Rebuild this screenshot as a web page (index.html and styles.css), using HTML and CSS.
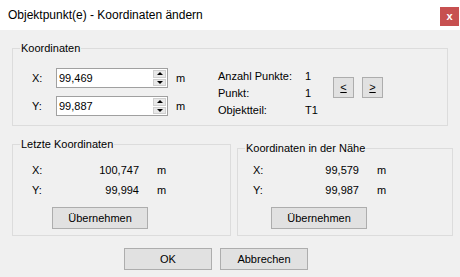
FILE: index.html
```html
<!DOCTYPE html>
<html lang="de">
<head>
  <meta charset="UTF-8" />
  <title>Objektpunkt(e) - Koordinaten ändern</title>
  <link rel="stylesheet" href="styles.css">
</head>
<body>
  <div class="dialog">
    <div class="titlebar">
      <span class="title">Objektpunkt(e) - Koordinaten ändern</span>
      <span class="close">x</span>
    </div>

    <div class="client">
      <fieldset class="group group-coords">
        <legend>Koordinaten</legend>
        <div class="coords">
          <div class="inputs">
            <div class="input-row">
              <span class="lbl">X:</span>
              <div class="spin">
                <span class="spin-value">99,469</span>
                <span class="spin-btns"><span class="spin-up"></span><span class="spin-down"></span></span>
              </div>
              <span class="unit">m</span>
            </div>
            <div class="input-row">
              <span class="lbl">Y:</span>
              <div class="spin">
                <span class="spin-value">99,887</span>
                <span class="spin-btns"><span class="spin-up"></span><span class="spin-down"></span></span>
              </div>
              <span class="unit">m</span>
            </div>
          </div>
          <div class="info">
            <div class="info-row"><span class="info-lbl">Anzahl Punkte:</span><span class="info-val">1</span></div>
            <div class="info-row"><span class="info-lbl">Punkt:</span><span class="info-val">1</span></div>
            <div class="info-row"><span class="info-lbl">Objektteil:</span><span class="info-val">T1</span></div>
          </div>
          <div class="nav-btns">
            <button class="btn btn-nav"><u>&lt;</u></button>
            <button class="btn btn-nav"><u>&gt;</u></button>
          </div>
        </div>
      </fieldset>

      <div class="lower">
        <fieldset class="group group-last">
          <legend>Letzte Koordinaten</legend>
          <div class="values">
            <div class="val-row"><span class="val-lbl">X:</span><span class="val">100,747</span><span class="val-unit">m</span></div>
            <div class="val-row"><span class="val-lbl">Y:</span><span class="val">99,994</span><span class="val-unit">m</span></div>
            <button class="btn btn-take">Übernehmen</button>
          </div>
        </fieldset>
        <fieldset class="group group-near">
          <legend>Koordinaten in der Nähe</legend>
          <div class="values">
            <div class="val-row"><span class="val-lbl">X:</span><span class="val">99,579</span><span class="val-unit">m</span></div>
            <div class="val-row"><span class="val-lbl">Y:</span><span class="val">99,987</span><span class="val-unit">m</span></div>
            <button class="btn btn-take">Übernehmen</button>
          </div>
        </fieldset>
      </div>

      <div class="actions">
        <button class="btn btn-action">OK</button>
        <button class="btn btn-action">Abbrechen</button>
      </div>
    </div>
  </div>
</body>
</html>
```

FILE: styles.css
```css
/* Base */
* { box-sizing:border-box; }
body { margin:0; width:460px; height:277px; overflow:hidden; background:#f0f0f0; font-family:"Liberation Sans", Arial, sans-serif; font-size:11px; color:#000; }
.dialog { width:460px; height:277px; background:#f0f0f0; }

/* Title bar */
.titlebar { display:flex; height:30px; background:#fff; }
.title { flex:1; padding-left:8px; font-size:12px; line-height:30px; }
.close { width:19px; height:19px; margin:7px 1px 0 0; background:#c75050; color:#fff; font-weight:bold; font-size:11px; line-height:18px; text-align:center; }

/* Group boxes */
.group { margin:0; padding:0; border:1px solid #dcdcdc; min-width:0; }
.group legend { margin-left:7px; padding:0 1px; line-height:13px; }
.group-coords { width:436px; margin:12px 0 0 12px; }

/* Buttons */
.btn { display:block; margin:0; padding:0; border:1px solid #adadad; background:#e1e1e1; font:inherit; color:#000; line-height:20px; text-align:center; }

/* Coordinates group */
.coords { display:flex; padding:13px 0 6px 19px; }
.inputs { display:flex; flex-direction:column; gap:8px; }
.input-row { display:flex; align-items:center; height:20px; }
.lbl { width:24px; }
.spin { display:flex; width:112px; height:20px; border:1px solid #a0a0a0; background:#fff; }
.spin-value { flex:1; padding-left:2px; line-height:18px; }
.spin-btns { display:flex; flex-direction:column; width:15px; padding:1px; gap:1px; }
.spin-up, .spin-down { flex:1; position:relative; border:1px solid #cfcfcf; background:#e8e8e8; }
.spin-up::after, .spin-down::after { content:''; position:absolute; left:50%; top:50%; margin:-2px 0 0 -3px; border-left:3px solid transparent; border-right:3px solid transparent; }
.spin-up::after { border-bottom:3px solid #000; }
.spin-down::after { border-top:3px solid #000; margin-top:-1px; }
.unit { width:50px; padding-left:8px; }
.info-row { display:flex; height:17px; line-height:17px; }
.info-lbl { width:87px; }
.info-val { width:28px; }
.nav-btns { display:flex; gap:8px; margin-top:9px; }
.btn-nav { width:21px; height:21px; line-height:19px; }

/* Lower groups */
.lower { display:flex; align-items:flex-start; margin-top:12px; }
.group-last { width:219px; margin-left:12px; }
.group-near { width:216px; margin:4px 0 0 6px; }
.values { padding:9px 0 6px 19px; }
.group-near .values { padding:5px 0 6px 15px; }
.val-row { display:flex; height:20px; line-height:20px; }
.val-lbl { width:50px; }
.val { width:57px; text-align:right; }
.group-near .val { width:56px; }
.val-unit { margin-left:18px; }
.btn-take { width:96px; height:22px; margin:7px 0 0 20px; }
.group-near .btn-take { margin-left:18px; }

/* Dialog buttons */
.actions { display:flex; gap:8px; margin-top:12px; padding-left:124px; }
.btn-action { width:88px; height:22px; }
```
